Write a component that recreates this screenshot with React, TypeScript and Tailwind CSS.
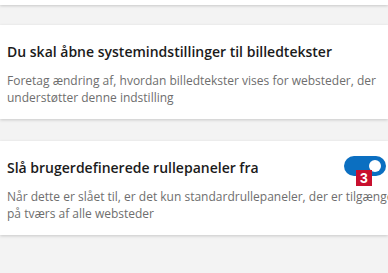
const font = { fontFamily: '"Segoe UI", "Open Sans", "Noto Sans", sans-serif' };

function SettingCard({ title, lines, toggle }: { title: string; lines: string[]; toggle?: boolean }) {
  return (
    <div className="relative bg-white shadow-[0_1px_3px_rgba(0,0,0,0.18)] pl-[7px] pt-[17px] pb-[13px]">
      <h3 className="text-[14px] leading-[20px] font-semibold text-[#1b1b1b] whitespace-nowrap">{title}</h3>
      <p className="mt-[10px] text-[12px] leading-[17px] text-[#6e6e6e] whitespace-nowrap">
        {lines.map((l, i) => (
          <span key={i} className="block">{l}</span>
        ))}
      </p>
      {toggle && (
        <>
          <div className="absolute left-[344px] top-[15px] w-[42px] h-[20px] rounded-full bg-[#0b6fc1] flex items-center justify-end pr-[5px]">
            <div className="w-[12px] h-[12px] rounded-full bg-white" />
          </div>
          <div
            className="absolute left-[356px] top-[29px] w-[16px] h-[16px] bg-[#c8102e] flex items-center justify-center text-white text-[14px] font-bold leading-none"
            style={{ fontFamily: '"Liberation Sans", Arial, sans-serif' }}
          >
            3
          </div>
        </>
      )}
    </div>
  );
}

export default function App() {
  return (
    <div className="w-[388px] h-[273px] overflow-hidden bg-[#f3f3f3]" style={font}>
      <div className="h-[5px] bg-white shadow-[0_1px_3px_rgba(0,0,0,0.18)]" />
      <div className="mt-[20px]">
        <SettingCard
          title="Du skal åbne systemindstillinger til billedtekster"
          lines={[
            "Foretag ændring af, hvordan billedtekster vises for websteder, der",
            "understøtter denne indstilling",
          ]}
        />
      </div>
      <div className="mt-[22px]">
        <SettingCard
          toggle
          title="Slå brugerdefinerede rullepaneler fra"
          lines={[
            "Når dette er slået til, er det kun standardrullepaneler, der er tilgængelige",
            "på tværs af alle websteder",
          ]}
        />
      </div>
    </div>
  );
}
